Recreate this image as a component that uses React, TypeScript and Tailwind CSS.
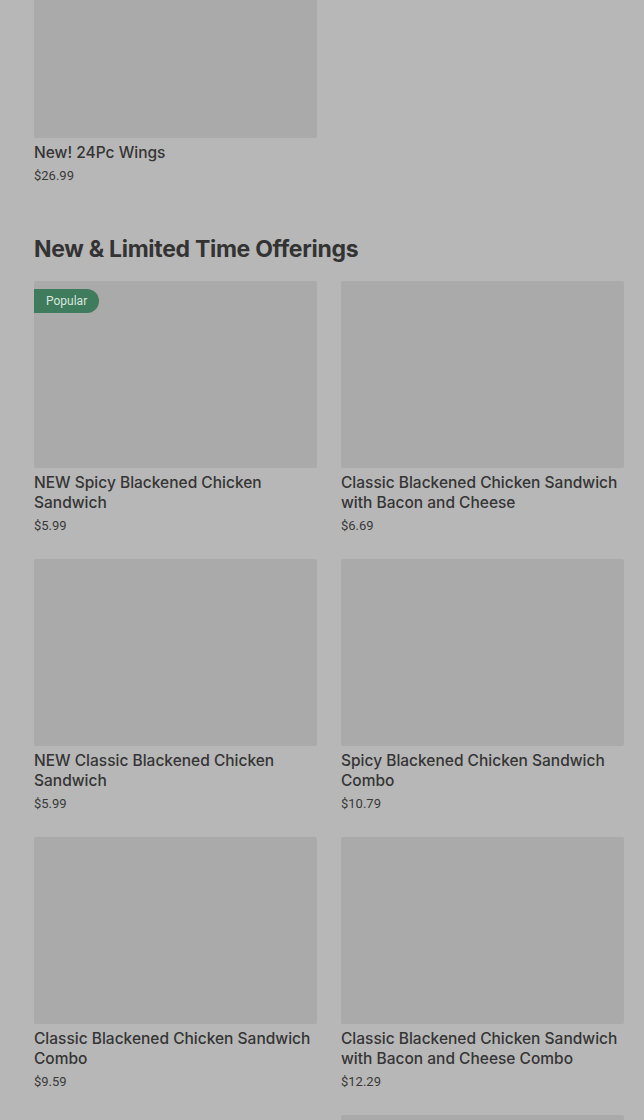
import type { FC } from 'react';

type Item = { name: string; price: string; badge?: string; noImage?: boolean };

const items: Item[] = [
  { name: 'NEW Spicy Blackened Chicken Sandwich', price: '$5.99', badge: 'Popular' },
  { name: 'Classic Blackened Chicken Sandwich with Bacon and Cheese', price: '$6.69' },
  { name: 'NEW Classic Blackened Chicken Sandwich', price: '$5.99' },
  { name: 'Spicy Blackened Chicken Sandwich Combo', price: '$10.79' },
  { name: 'Classic Blackened Chicken Sandwich Combo', price: '$9.59' },
  { name: 'Classic Blackened Chicken Sandwich with Bacon and Cheese Combo', price: '$12.29' },
  { name: 'Spicy Blackened Chicken Sandwich with Bacon and Cheese', price: '$6.69', noImage: true },
  { name: 'Classic Blackened Chicken Sandwich Meal', price: '$9.59' },
];

const ItemCard: FC<{ item: Item }> = ({ item }) => (
  <div className="flex flex-col">
    {!item.noImage && (
      <div className="relative h-[187px] bg-[#aaaaaa] rounded-[2px]">
        {item.badge && (
          <span className="absolute left-0 top-2 h-6 pl-3 pr-3 flex items-center rounded-r-full bg-[#3f7b5d] text-[12px] text-[#d9e6df] font-['Roboto',sans-serif]">
            {item.badge}
          </span>
        )}
      </div>
    )}
    <div className="mt-[5px] text-[15.5px] leading-5 font-medium text-[#353535] font-['Inter',sans-serif]">{item.name}</div>
    <div className="mt-[5px] text-[13px] leading-4 text-[#3a3a3a]">{item.price}</div>
  </div>
);

export default function App() {
  return (
    <div className="h-[1120px] overflow-hidden bg-[#b7b7b7] pl-[34px] pr-[20px] font-['Roboto','Liberation_Sans',sans-serif]">
      <div className="grid grid-cols-2 gap-x-6">
        <div className="flex flex-col">
          <div className="h-[138px] bg-[#aaaaaa] rounded-b-[2px]" />
          <div className="mt-[5px] text-[15.5px] leading-5 font-medium text-[#353535] font-['Inter',sans-serif]">New! 24Pc Wings</div>
          <div className="mt-[5px] text-[13px] leading-4 text-[#3a3a3a]">$26.99</div>
        </div>
      </div>

      <h2 className="mt-[51px] text-[23px] leading-7 font-bold tracking-[-0.3px] text-[#333333] font-['Inter',sans-serif]">
        New &amp; Limited Time Offerings
      </h2>

      <div className="mt-[18px] grid grid-cols-2 gap-x-6 gap-y-[25px]">
        {items.map((item, i) => (
          <ItemCard key={i} item={item} />
        ))}
      </div>
    </div>
  );
}
